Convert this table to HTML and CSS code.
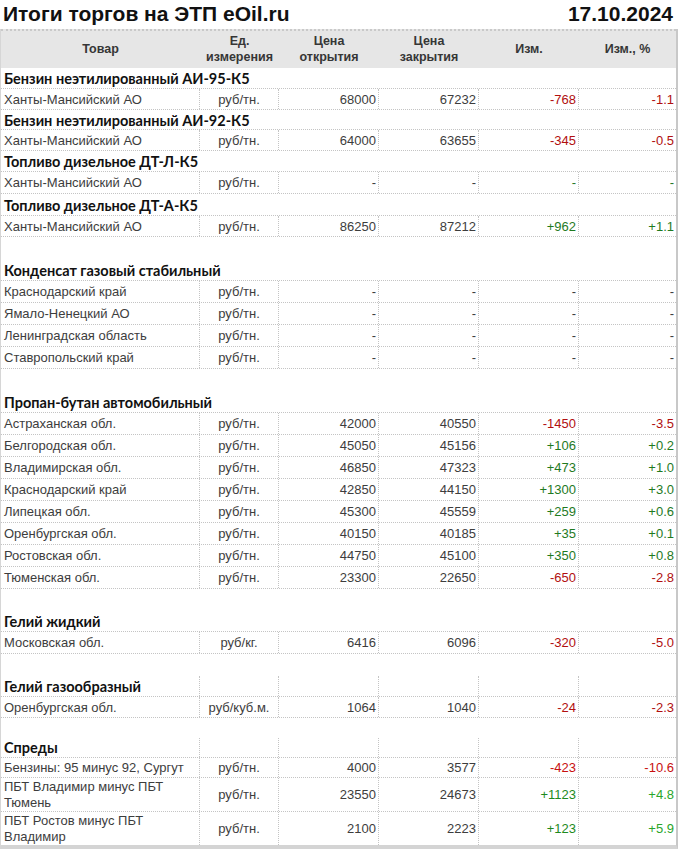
FILE: index.html
```html
<!DOCTYPE html>
<html lang="ru">
<head>
<meta charset="utf-8">
<title>Итоги торгов на ЭТП eOil.ru</title>
<link rel="stylesheet" href="styles.css">
</head>
<body>
<div class="sheet">
  <div class="titlebar">
    <span class="title">Итоги торгов на ЭТП eOil.ru</span>
    <span class="date">17.10.2024</span>
  </div>
  <div class="grid">
    <div class="row head">
      <div class="hc">Товар</div>
      <div class="hc">Ед.<br>измерения</div>
      <div class="hc">Цена<br>открытия</div>
      <div class="hc">Цена<br>закрытия</div>
      <div class="hc">Изм.</div>
      <div class="hc">Изм., %</div>
    </div>

    <div class="row cat h21"><div class="cn">Бензин неэтилированный АИ-95-К5</div></div>
    <div class="row data h21"><div class="c name">Ханты-Мансийский АО</div><div class="c unit">руб/тн.</div><div class="c num">68000</div><div class="c num">67232</div><div class="c num neg">-768</div><div class="c num neg">-1.1</div></div>
    <div class="row cat h20"><div class="cn">Бензин неэтилированный АИ-92-К5</div></div>
    <div class="row data h21"><div class="c name">Ханты-Мансийский АО</div><div class="c unit">руб/тн.</div><div class="c num">64000</div><div class="c num">63655</div><div class="c num neg">-345</div><div class="c num neg">-0.5</div></div>
    <div class="row cat h21"><div class="cn">Топливо дизельное ДТ-Л-К5</div></div>
    <div class="row data"><div class="c name">Ханты-Мансийский АО</div><div class="c unit">руб/тн.</div><div class="c num">-</div><div class="c num">-</div><div class="c num pos">-</div><div class="c num pos">-</div></div>
    <div class="row cat"><div class="cn">Топливо дизельное ДТ-А-К5</div></div>
    <div class="row data h21"><div class="c name">Ханты-Мансийский АО</div><div class="c unit">руб/тн.</div><div class="c num">86250</div><div class="c num">87212</div><div class="c num pos">+962</div><div class="c num pos">+1.1</div></div>
    <div class="row empty"></div>

    <div class="row cat"><div class="cn">Конденсат газовый стабильный</div></div>
    <div class="row data"><div class="c name">Краснодарский край</div><div class="c unit">руб/тн.</div><div class="c num">-</div><div class="c num">-</div><div class="c num">-</div><div class="c num">-</div></div>
    <div class="row data"><div class="c name">Ямало-Ненецкий АО</div><div class="c unit">руб/тн.</div><div class="c num">-</div><div class="c num">-</div><div class="c num">-</div><div class="c num">-</div></div>
    <div class="row data"><div class="c name">Ленинградская область</div><div class="c unit">руб/тн.</div><div class="c num">-</div><div class="c num">-</div><div class="c num">-</div><div class="c num">-</div></div>
    <div class="row data"><div class="c name">Ставропольский край</div><div class="c unit">руб/тн.</div><div class="c num">-</div><div class="c num">-</div><div class="c num">-</div><div class="c num">-</div></div>
    <div class="row empty"></div>

    <div class="row cat"><div class="cn">Пропан-бутан автомобильный</div></div>
    <div class="row data"><div class="c name">Астраханская обл.</div><div class="c unit">руб/тн.</div><div class="c num">42000</div><div class="c num">40550</div><div class="c num neg">-1450</div><div class="c num neg">-3.5</div></div>
    <div class="row data"><div class="c name">Белгородская обл.</div><div class="c unit">руб/тн.</div><div class="c num">45050</div><div class="c num">45156</div><div class="c num pos">+106</div><div class="c num pos">+0.2</div></div>
    <div class="row data"><div class="c name">Владимирская обл.</div><div class="c unit">руб/тн.</div><div class="c num">46850</div><div class="c num">47323</div><div class="c num pos">+473</div><div class="c num pos">+1.0</div></div>
    <div class="row data"><div class="c name">Краснодарский край</div><div class="c unit">руб/тн.</div><div class="c num">42850</div><div class="c num">44150</div><div class="c num pos">+1300</div><div class="c num pos">+3.0</div></div>
    <div class="row data"><div class="c name">Липецкая обл.</div><div class="c unit">руб/тн.</div><div class="c num">45300</div><div class="c num">45559</div><div class="c num pos">+259</div><div class="c num pos">+0.6</div></div>
    <div class="row data"><div class="c name">Оренбургская обл.</div><div class="c unit">руб/тн.</div><div class="c num">40150</div><div class="c num">40185</div><div class="c num pos">+35</div><div class="c num pos">+0.1</div></div>
    <div class="row data"><div class="c name">Ростовская обл.</div><div class="c unit">руб/тн.</div><div class="c num">44750</div><div class="c num">45100</div><div class="c num pos">+350</div><div class="c num pos">+0.8</div></div>
    <div class="row data"><div class="c name">Тюменская обл.</div><div class="c unit">руб/тн.</div><div class="c num">23300</div><div class="c num">22650</div><div class="c num neg">-650</div><div class="c num neg">-2.8</div></div>
    <div class="row empty h21"></div>

    <div class="row cat"><div class="cn">Гелий жидкий</div></div>
    <div class="row data"><div class="c name">Московская обл.</div><div class="c unit">руб/кг.</div><div class="c num">6416</div><div class="c num">6096</div><div class="c num neg">-320</div><div class="c num neg">-5.0</div></div>
    <div class="row empty"></div>

    <div class="row cat split h21"><div class="c name bold">Гелий газообразный</div><div class="c"></div><div class="c"></div><div class="c"></div><div class="c"></div><div class="c"></div></div>
    <div class="row data h21"><div class="c name">Оренбургская обл.</div><div class="c unit">руб/куб.м.</div><div class="c num">1064</div><div class="c num">1040</div><div class="c num neg">-24</div><div class="c num neg">-2.3</div></div>
    <div class="row empty h20"></div>

    <div class="row cat split h20"><div class="c name bold">Спреды</div><div class="c"></div><div class="c"></div><div class="c"></div><div class="c"></div><div class="c"></div></div>
    <div class="row data h20"><div class="c name">Бензины: 95 минус 92, Сургут</div><div class="c unit">руб/тн.</div><div class="c num">4000</div><div class="c num">3577</div><div class="c num neg2">-423</div><div class="c num neg2">-10.6</div></div>
    <div class="row data tall"><div class="c name wrap">ПБТ Владимир минус ПБТ Тюмень</div><div class="c unit">руб/тн.</div><div class="c num">23550</div><div class="c num">24673</div><div class="c num pos2">+1123</div><div class="c num pos3">+4.8</div></div>
    <div class="row data tall2 last"><div class="c name wrap">ПБТ Ростов минус ПБТ Владимир</div><div class="c unit">руб/тн.</div><div class="c num">2100</div><div class="c num">2223</div><div class="c num pos2">+123</div><div class="c num pos3">+5.9</div></div>
  </div>
</div>
</body>
</html>
```

FILE: styles.css
```css
* { box-sizing: border-box; }
html, body { margin: 0; padding: 0; background: #fff; }
body {
  font-family: "Liberation Sans", Arial, sans-serif;
  font-size: 13px;
  color: #3d3d3d;
}
.sheet { width: 678px; }
.titlebar {
  height: 29px;
  display: flex;
  justify-content: space-between;
  align-items: flex-end;
  padding: 0 5px 3px 3px;
  font-weight: bold;
  font-size: 21px;
  color: #111;
  line-height: 24px;
}
.grid {
  border-left: 1px solid #d6d6d6;
  border-right: 2px solid #c8c8c8;
  border-bottom: 4px solid #d4d4d4;
}
.row {
  display: grid;
  grid-template-columns: 199px 79px 100px 100px 100px 97px;
  height: 22px;
}
.row.h21 { height: 21px; }
.row.h20 { height: 20px; }
.head {
  height: 39px;
  background: #e6e6e6;
  border-top: 2px dotted #c9c9c9;
}
.hc {
  display: flex;
  align-items: center;
  justify-content: center;
  text-align: center;
  font-weight: bold;
  font-size: 12.5px;
  line-height: 16px;
  color: #363636;
  padding-bottom: 2px;
}
.cat { border-bottom: 1px dotted #c4c4c4; }
.cn, .bold {
  font-family: "Lato", "Open Sans", sans-serif;
  font-weight: bold;
  font-size: 14.5px;
  color: #111;
}
.cn {
  grid-column: 1 / -1;
  display: flex;
  align-items: center;
  padding-left: 3px;
  padding-top: 1px;
}
.data { border-bottom: 1px dotted #c4c4c4; }
.c {
  display: flex;
  align-items: center;
  border-right: 1px dotted #c4c4c4;
  white-space: nowrap;
  overflow: hidden;
}
.c:last-child { border-right: none; }
.name { padding-left: 3px; }
.unit { justify-content: center; }
.num { justify-content: flex-end; padding-right: 2px; }
.wrap { white-space: normal; line-height: 16px; padding-right: 20px; }
.neg { color: #b10f0f; }
.neg2 { color: #c80f0f; }
.pos { color: #1f7a1f; }
.pos2 { color: #1d8a1d; }
.pos3 { color: #2aa52a; }
.tall { height: 34px; }
.tall2 { height: 33px; }
.last { border-bottom: none; }
```
